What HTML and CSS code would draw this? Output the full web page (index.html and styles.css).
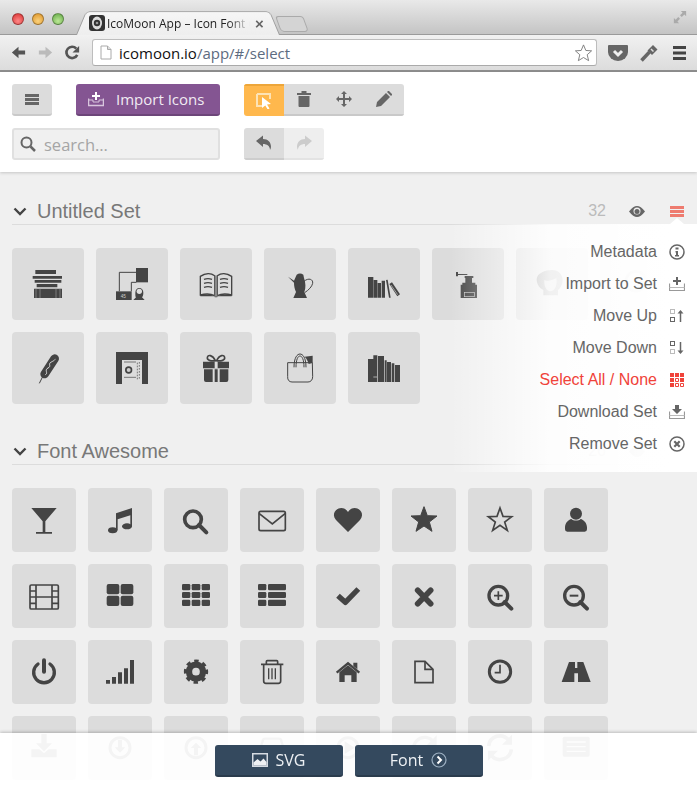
FILE: index.html
```html
<!DOCTYPE html>
<html lang="en">
<head>
<meta charset="utf-8">
<title>IcoMoon App</title>
<link rel="stylesheet" href="styles.css">
</head>
<body>
<header class="browser">
  <div class="tabstrip">
    <div class="lights"><i class="light red"></i><i class="light amber"></i><i class="light green"></i></div>
    <div class="tab">
      <svg class="favicon" viewBox="0 0 16 16"><rect width="16" height="16" rx="3" fill="#333"/><ellipse cx="8" cy="8" rx="5" ry="6.5" fill="#ddd"/><circle cx="8" cy="8" r="3.2" fill="#333"/><circle cx="8" cy="8" r="1.3" fill="#999"/></svg>
      <span class="tab-title">IcoMoon App – Icon Font C</span>
      <span class="tab-close">×</span>
    </div>
    <div class="newtab"></div>
    <svg class="fullscreen" viewBox="0 0 16 16"><path d="M9 1h6v6l-2-2-3 3-2-2 3-3zM7 15H1V9l2 2 3-3 2 2-3 3z" fill="#aaa"/></svg>
  </div>
  <div class="toolbar">
    <svg class="nav" viewBox="0 0 18 18"><path d="M2 9l7-6v4h7v4H9v4z" fill="#555"/></svg>
    <svg class="nav" viewBox="0 0 18 18"><path d="M16 9l-7-6v4H2v4h7v4z" fill="#bbb"/></svg>
    <svg class="nav" viewBox="0 0 18 18"><path d="M14 11.5A6 6 0 1 1 13 4.8" fill="none" stroke="#555" stroke-width="2.8"/><path d="M16 2v7H9z" fill="#555"/></svg>
    <div class="omnibox">
      <svg class="pageic" viewBox="0 0 12 14"><path d="M1 .5h6.500l3.500 3.500v9.500H1z" fill="#fff" stroke="#aaa"/><path d="M7.500 .5V4H11" fill="#ddd" stroke="#aaa"/></svg>
      <span class="url"><b>icomoon.io</b>/app/#/select</span>
      <svg class="urlstar" viewBox="0 0 20 20"><polygon points="10,1 12.600,7.200 19,7.600 14.100,11.900 15.700,18.500 10,15 4.300,18.500 5.900,11.900 1,7.600 7.400,7.200" fill="#fff" stroke="#777"/></svg>
    </div>
    <svg class="ext pocket" viewBox="0 0 20 16"><path d="M1 0h18a1 1 0 0 1 1 1v6a10 9 0 0 1-20 0V1a1 1 0 0 1 1-1z" fill="#666"/><path d="M6 6l4 4 4-4" fill="none" stroke="#eee" stroke-width="3"/></svg>
    <svg class="ext key" viewBox="0 0 18 18"><path d="M1.500 16.500L9.500 8" stroke="#666" stroke-width="3.500"/><path d="M7.500 6.500L13 1l4.500 4.500L12 11z" fill="#666"/><path d="M11 5l2.500 2.500" stroke="#ddd" stroke-width="1.500"/></svg>
    <svg class="ext burger" viewBox="0 0 14 14"><path d="M0 0h13v3H0zM0 5.500h13v3H0zM0 11h13v3H0z" fill="#444"/></svg>
  </div>
</header>

<section class="topbar">
  <div class="row">
    <button class="btn btn-menu"><svg class="ic16" viewBox="0 0 16 16"><path d="M1 3h14v3H1zM1 7h14v3H1zM1 11h14v3H1z" fill="#666"/></svg></button>
    <button class="btn btn-import">
      <svg class="ic16" viewBox="0 0 16 14"><path d="M7 0h2v3h3v2H9v3H7V5H4V3h3z" fill="#fff"/><path d="M.500 6.500v7h15v-7" fill="none" stroke="#d8c6dd" stroke-width="1.500"/><path d="M.500 8h4.500v2h6V8h4.500" fill="none" stroke="#d8c6dd"/></svg>
      <span>Import Icons</span>
    </button>
    <div class="group">
      <button class="seg seg-on"><svg class="ic16" viewBox="0 0 16 16"><path d="M1 1h13v5M1 1v12h5" fill="none" stroke="#fde3b6" stroke-width="2"/><path d="M6 4l9 7-4 .5 2.500 4-1.800 1-2.400-4L6 15z" fill="#fff"/></svg></button>
      <button class="seg"><svg class="ic16" viewBox="0 0 16 16"><path d="M1 2h14v2H1zM5.500 2V0h5v2zM2.500 5h11v10a1 1 0 0 1-1 1h-9a1 1 0 0 1-1-1z" fill="#666"/></svg></button>
      <button class="seg"><svg class="ic16" viewBox="0 0 16 16"><path d="M8 0l3 3H9v4h4V5l3 3-3 3V9H9v4h2l-3 3-3-3h2V9H3v2L0 8l3-3v2h4V3H5z" fill="#666"/></svg></button>
      <button class="seg"><svg class="ic16" viewBox="0 0 16 16"><path d="M0 16l1-5 9-9 4 4-9 9zM11 1l1-1h1l3 3v1l-1 1z" fill="#666"/></svg></button>
    </div>
  </div>
  <div class="row">
    <div class="search">
      <svg class="ic16" viewBox="0 0 16 16"><circle cx="6.500" cy="6.500" r="5" fill="none" stroke="#666" stroke-width="2"/><path d="M10.500 10.500L15 15" stroke="#666" stroke-width="2.500"/></svg>
      <span class="placeholder">search…</span>
    </div>
    <div class="group group-undo">
      <button class="seg seg-undo"><svg class="ic16" viewBox="0 0 16 16"><path d="M0 6l7-5.500V4c5 0 8 3 8 8 0 1-.500 2-1 3 0-4-3-6-7-6v3z" fill="#666"/></svg></button>
      <button class="seg seg-redo"><svg class="ic16" viewBox="0 0 16 16"><path d="M16 6L9 .500V4c-5 0-8 3-8 8 0 1 .500 2 1 3 0-4 3-6 7-6v3z" fill="#ccc"/></svg></button>
    </div>
  </div>
</section>

<main class="main">
  <section class="set">
    <div class="set-head">
      <svg class="chev" viewBox="0 0 14 10"><path d="M1.500 1.500L7 7l5.500-5.500" fill="none" stroke="#444" stroke-width="2.400"/></svg>
      <h2>Untitled Set</h2>
      <span class="count">32</span>
      <svg class="eye" viewBox="0 0 16 11"><path d="M0 5.500C3 1.500 5.500 0 8 0s5 1.500 8 5.500C13 9.500 10.500 11 8 11S3 9.500 0 5.500z" fill="#666"/><circle cx="8" cy="5" r="3.500" fill="#eee"/><circle cx="8" cy="5.500" r="2.500" fill="#666"/></svg>
      <svg class="menuic" viewBox="0 0 14 11"><path d="M0 0h14v3H0zM0 4h14v3H0zM0 8h14v3H0z" fill="#ee7b6f"/></svg>
    </div>
    <div class="grid grid-big">
      <div class="tile"><svg viewBox="0 0 216 216"><path d="M70 66h62v12H70zM62 84h88v8H62zM68 96h80v8H68zM74 108h62v10H74zM66 122h84v28H66z"/><path d="M72 122v28M84 122v28M132 122v28M144 122v28" stroke="#999" stroke-width="2"/></svg></div>
      <div class="tile"><svg viewBox="0 0 216 216"><path d="M70 130V73h50" fill="none" stroke="#444" stroke-width="3"/><path d="M120 60h36v43h-36z"/><path d="M106 103h15M106 103v27" stroke="#444" stroke-width="3"/><path d="M60 130h47v26H60z"/><text class="tiny" x="74" y="150">45</text><path d="M118 134a12 14 0 0 1 24 0c0 8-2 12-4 14l8 8h-34l8-8c-2-2-2-6-2-14z"/><circle cx="130" cy="130" r="8" fill="#dcdcdc"/></svg></div>
      <div class="tile"><svg viewBox="0 0 216 216"><path d="M61 85c15-10 32-10 43-2v60c-12-6-28-6-43-2zM155 85c-15-10-32-10-43-2v60c12-6 28-6 43-2z" fill="none" stroke="#444" stroke-width="4"/><path d="M72 94c8-3 16-3 24 0M72 106c8-3 16-3 24 0M72 118c8-3 16-3 24 0M120 94c8-3 16-3 24 0M120 106c8-3 16-3 24 0M120 118c8-3 16-3 24 0" fill="none" stroke="#444" stroke-width="4"/><path d="M104 83h8v65h-8z" fill="#888"/><path d="M61 141c15-3 32-3 47 5 15-8 32-8 47-5v4H112l-4 3-4-3H61z"/></svg></div>
      <div class="tile"><svg viewBox="0 0 216 216"><path d="M98 80c6-5 14-5 20 0l2 10c5 14 6 30 1 42l8 18H88l8-18c-4-10-6-18-6-28L72 86l18 12z"/><path d="M120 100c14-12 28-6 26 6-2 10-12 20-24 28" fill="none" stroke="#444" stroke-width="3"/></svg></div>
      <div class="tile"><svg viewBox="0 0 216 216"><path d="M60 87h16v62H60zM77 96h11v53H77zM89 105h10v44H89zM101 98h10v51h-10zM114 96l5-1 9 54h-5z"/><path d="M124 108l8-5 24 36-8 6z"/><path d="M129 111l20 29" stroke="#ccc" stroke-width="2"/></svg></div>
      <div class="tile"><svg viewBox="0 0 216 216"><path d="M72 72h6v6h28v3H78v4h-6zM98 84h26v6h-4v14h10v6h5v40H86v-40h5v-6h9V90h-2z"/><rect x="97" y="133" width="30" height="13" fill="none" stroke="#ccc" stroke-width="2"/></svg></div>
      <div class="tile"><svg viewBox="0 0 216 216"><path d="M108 66c20 0 32 14 32 30 0 12-6 24-14 30v16H82v-16c-14-6-20-20-20-32 0-18 26-28 46-28z" fill="#888"/><path d="M85 96c10 6 30-2 36-6 4 20-4 40-18 40-12 0-20-18-18-34z" fill="#ccc"/></svg></div>
      <div class="tile"><svg viewBox="0 0 216 216"><circle cx="108" cy="100" r="30" fill="none" stroke="#777" stroke-width="8"/></svg></div>
      <div class="tile"><svg viewBox="0 0 216 216"><path d="M128 80L98 126" stroke="#444" stroke-width="26" stroke-linecap="round"/><path d="M92 134L82 154" stroke="#444" stroke-width="3"/><path d="M100 128c10-4-4-14 8-20s-2-12 10-18 8-6 12-8" fill="none" stroke="#ddd" stroke-width="3"/></svg></div>
      <div class="tile"><svg viewBox="0 0 216 216"><path d="M60 60h96v96h-18V84H78v72H60z"/><path d="M84 90h36M84 136h36" stroke="#444" stroke-width="2"/><circle cx="98" cy="114" r="11"/><circle cx="98" cy="114" r="6" fill="#ccc"/><path d="M124 92v50M130 90v52" stroke="#777" stroke-width="3" stroke-dasharray="5 4"/></svg></div>
      <div class="tile"><svg viewBox="0 0 216 216"><path d="M69 89h78v20H69zM72 112h26v38H78a6 6 0 0 1-6-6zM104 112h9v38h-9zM119 112h26v32a6 6 0 0 1-6 6h-20z"/><path d="M104 89h9v20h-9z" fill="#dcdcdc"/><path d="M106 86c-8-18-24-20-24-8 0 8 14 10 24 8zM110 86c8-18 24-20 24-8 0 8-14 10-24 8z" fill="none" stroke="#444" stroke-width="5"/></svg></div>
      <div class="tile"><svg viewBox="0 0 216 216"><path d="M71 92h74l1 42c0 10-6 16-14 16H84c-8 0-14-6-13-16z" fill="none" stroke="#444" stroke-width="3"/><path d="M90 106c0-30 10-40 18-40s18 10 18 40M96 106c0-24 6-34 12-34s12 10 12 34" fill="none" stroke="#444" stroke-width="3"/><path d="M122 74l24-3v21l-12 4c-2-8-6-16-12-22z"/></svg></div>
      <div class="tile"><svg viewBox="0 0 216 216"><path d="M60 81h16v69H60zM76 70h12v80H76zM90 72h18v78H90zM110 85h6v65h-6zM117 90h12v60h-12zM131 94h8v56h-8zM141 99h15v51h-15z"/><path d="M76 135h12" stroke="#aaa" stroke-width="3"/></svg></div>
    </div>
  </section>

  <section class="set set-fa">
    <div class="set-head">
      <svg class="chev" viewBox="0 0 14 10"><path d="M1.500 1.500L7 7l5.500-5.500" fill="none" stroke="#444" stroke-width="2.400"/></svg>
      <h2>Font Awesome</h2>
      <span class="count">26</span>
      <svg class="eye" viewBox="0 0 16 11"><path d="M0 5.500C3 1.500 5.500 0 8 0s5 1.500 8 5.500C13 9.500 10.500 11 8 11S3 9.500 0 5.500z" fill="#666"/></svg>
      <svg class="menuic" viewBox="0 0 14 11"><path d="M0 0h14v3H0zM0 4h14v3H0zM0 8h14v3H0z" fill="#999"/></svg>
    </div>
    <div class="grid grid-fa">
      <div class="tile"><svg viewBox="0 0 192 192"><polygon points="58,60 134,60 100,100 100,132 120,132 120,137 72,137 72,132 92,132 92,100"/></svg></div>
      <div class="tile"><svg viewBox="0 0 192 192"><ellipse cx="74" cy="127" rx="14" ry="9"/><ellipse cx="117" cy="115" rx="15" ry="9"/><path d="M84 127V76l48-16v55h-5V82l-38 12v33z"/></svg></div>
      <div class="tile"><svg viewBox="0 0 192 192"><circle cx="87" cy="94" r="25" fill="none" stroke="#444" stroke-width="11"/><path d="M105 111l22 22" stroke="#444" stroke-width="12" stroke-linecap="round"/></svg></div>
      <div class="tile"><svg viewBox="0 0 192 192"><rect x="57" y="70" width="79" height="58" rx="5" fill="none" stroke="#444" stroke-width="5"/><path d="M57 76l40 32 39-32" fill="none" stroke="#444" stroke-width="5"/></svg></div>
      <div class="tile"><svg viewBox="0 0 192 192"><path d="M96 132L60 96C45 78 60 60 76 60c10 0 16 6 20 12 4-6 10-12 20-12 16 0 31 18 16 36z"/></svg></div>
      <div class="tile"><svg viewBox="0 0 192 192"><polygon points="96,56 106,83 135,84 112,102 120,130 96,114 72,130 80,102 57,84 86,83" stroke="#444" stroke-width="3" stroke-linejoin="round"/></svg></div>
      <div class="tile"><svg viewBox="0 0 192 192"><polygon points="96,60 105,85 131,86 110,102 118,127 96,112 74,127 82,102 61,86 87,85" fill="none" stroke="#444" stroke-width="5"/></svg></div>
      <div class="tile"><svg viewBox="0 0 192 192"><circle cx="96" cy="77" r="18"/><path d="M63 118c0-14 11-23 19-25 6 6 22 6 28 0 8 2 19 11 19 25v6q0 7-7 7H70q-7 0-7-7z"/></svg></div>

      <div class="tile"><svg viewBox="0 0 192 192"><rect x="54" y="63" width="85" height="72" rx="4" fill="none" stroke="#444" stroke-width="5"/><path d="M72 63v72M120 63v72M54 81h18M54 99h18M54 118h18M120 81h19M120 99h19M120 118h19M72 99h48" fill="none" stroke="#444" stroke-width="5"/></svg></div>
      <div class="tile"><svg viewBox="0 0 192 192"><rect x="56" y="60" width="38" height="31" rx="6"/><rect x="98" y="60" width="38" height="31" rx="6"/><rect x="56" y="95" width="38" height="31" rx="6"/><rect x="98" y="95" width="38" height="31" rx="6"/></svg></div>
      <div class="tile"><svg viewBox="0 0 192 192"><rect x="54" y="60" width="25" height="19" rx="4"/><rect x="83" y="60" width="26" height="19" rx="4"/><rect x="113" y="60" width="25" height="19" rx="4"/><rect x="54" y="84" width="25" height="18" rx="4"/><rect x="83" y="84" width="26" height="18" rx="4"/><rect x="113" y="84" width="25" height="18" rx="4"/><rect x="54" y="107" width="25" height="19" rx="4"/><rect x="83" y="107" width="26" height="19" rx="4"/><rect x="113" y="107" width="25" height="19" rx="4"/></svg></div>
      <div class="tile"><svg viewBox="0 0 192 192"><rect x="54" y="60" width="25" height="19" rx="4"/><rect x="84" y="60" width="54" height="19" rx="4"/><rect x="54" y="84" width="25" height="18" rx="4"/><rect x="84" y="84" width="54" height="18" rx="4"/><rect x="54" y="107" width="25" height="19" rx="4"/><rect x="84" y="107" width="54" height="19" rx="4"/></svg></div>
      <div class="tile"><svg viewBox="0 0 192 192"><path d="M66 95l22 20 39-40" fill="none" stroke="#444" stroke-width="16" stroke-linejoin="round"/></svg></div>
      <div class="tile"><svg viewBox="0 0 192 192"><path d="M77 79l39 40M116 79l-39 40" stroke="#444" stroke-width="17" stroke-linecap="round"/></svg></div>
      <div class="tile"><svg viewBox="0 0 192 192"><circle cx="91" cy="95" r="28" fill="none" stroke="#444" stroke-width="10"/><path d="M110 114l20 20" stroke="#444" stroke-width="12" stroke-linecap="round"/><path d="M78 95h26M91 82v26" stroke="#444" stroke-width="5"/></svg></div>
      <div class="tile"><svg viewBox="0 0 192 192"><circle cx="90" cy="95" r="28" fill="none" stroke="#444" stroke-width="10"/><path d="M109 114l20 20" stroke="#444" stroke-width="12" stroke-linecap="round"/><path d="M77 95h26" stroke="#444" stroke-width="6"/></svg></div>

      <div class="tile"><svg viewBox="0 0 192 192"><path d="M78 72a31 31 0 1 0 36 0" fill="none" stroke="#444" stroke-width="10" stroke-linecap="round"/><path d="M96 61v34" stroke="#444" stroke-width="12" stroke-linecap="round"/></svg></div>
      <div class="tile"><svg viewBox="0 0 192 192"><path d="M54 120h12v11H54zM72 111h12v20H72zM90 97h12v34H90zM108 85h12v46h-12zM126 60h12v71h-12z"/></svg></div>
      <div class="tile"><svg viewBox="0 0 192 192"><circle cx="96" cy="95" r="21" fill="none" stroke="#444" stroke-width="19"/><circle cx="96" cy="95" r="32" fill="none" stroke="#444" stroke-width="9" stroke-dasharray="13 12.130" transform="rotate(-11 96 95)"/></svg></div>
      <div class="tile"><svg viewBox="0 0 192 192"><path d="M63 73h67M79 72V65q0-3 3-3h28q3 0 3 3v7" fill="none" stroke="#444" stroke-width="5"/><path d="M71 73v50q0 7 7 7h37q7 0 7-7V73" fill="none" stroke="#444" stroke-width="5"/><path d="M86 85v33M96 85v33M106 85v33" stroke="#444" stroke-width="4"/></svg></div>
      <div class="tile"><svg viewBox="0 0 192 192"><path d="M62 98l34-28 34 28" fill="none" stroke="#444" stroke-width="7"/><path d="M112 68h12v20l-12-10zM70 97l26-21 26 21v29h-16v-20H86v20H70z"/></svg></div>
      <div class="tile"><svg viewBox="0 0 192 192"><path d="M69 64h30l24 24v40H69z" fill="none" stroke="#444" stroke-width="5"/><path d="M99 64v24h24" fill="none" stroke="#444" stroke-width="5"/></svg></div>
      <div class="tile"><svg viewBox="0 0 192 192"><circle cx="96" cy="95" r="32" fill="none" stroke="#444" stroke-width="9"/><path d="M96 74v24H80" fill="none" stroke="#444" stroke-width="5"/></svg></div>
      <div class="tile"><svg viewBox="0 0 192 192"><path d="M75 66h43l22 60H53z"/><path d="M93 66h7v18h-7zM91 100h11v26H91z" fill="#dcdcdc"/></svg></div>

      <div class="tile"><svg viewBox="0 0 192 192"><path d="M88 54h16v28h16l-24 24-24-24h16zM58 100h24l14 12 14-12h24v24H58z"/></svg></div>
      <div class="tile"><svg viewBox="0 0 192 192"><circle cx="96" cy="95" r="30" fill="none" stroke="#444" stroke-width="9"/><path d="M90 72h12v22h10l-16 16-16-16h10z"/></svg></div>
      <div class="tile"><svg viewBox="0 0 192 192"><circle cx="96" cy="95" r="30" fill="none" stroke="#444" stroke-width="9"/><path d="M90 118h12V96h10L96 80 80 96h10z"/></svg></div>
      <div class="tile"><svg viewBox="0 0 192 192"><path d="M68 75q0-7 8-7h40q8 0 8 7l12 36v24H56v-24z" fill="none" stroke="#444" stroke-width="7"/></svg></div>
      <div class="tile"><svg viewBox="0 0 192 192"><circle cx="96" cy="95" r="30" fill="none" stroke="#444" stroke-width="9"/><path d="M86 76l30 19-30 19z"/></svg></div>
      <div class="tile"><svg viewBox="0 0 192 192"><path d="M126 80a33 33 0 1 0 4 24" fill="none" stroke="#444" stroke-width="10"/><path d="M134 58v30h-30z"/></svg></div>
      <div class="tile"><svg viewBox="0 0 192 192"><path d="M62 90a34 34 0 0 1 60-18M130 100a34 34 0 0 1-60 18" fill="none" stroke="#444" stroke-width="11"/><path d="M132 56v30h-30zM60 134v-30h30z"/></svg></div>
      <div class="tile"><svg viewBox="0 0 192 192"><rect x="56" y="62" width="81" height="60" rx="5" fill="#444"/><path d="M68 78h57M68 92h57M68 106h57" stroke="#dcdcdc" stroke-width="4"/></svg></div>
    </div>
  </section>
</main>

<aside class="setmenu">
  <div class="item"><span>Metadata</span><svg class="ic16" viewBox="0 0 16 16"><circle cx="8" cy="8" r="7" fill="none" stroke="#666" stroke-width="1.500"/><path d="M6.500 3.500h3v2h-3zM6.500 7h2.500v4h1v1.500h-4V11h1V8.500h-.500z" fill="#666"/></svg></div>
  <div class="item"><span>Import to Set</span><svg class="ic16" viewBox="0 0 16 14"><path d="M7 0h2v3h3v2H9v3H7V5H4V3h3z" fill="#666"/><path d="M.500 6.500v7h15v-7" fill="none" stroke="#999" stroke-width="1.200"/><path d="M.500 10.500h15" stroke="#bbb" stroke-width="1"/></svg></div>
  <div class="item"><span>Move Up</span><svg class="ic16" viewBox="0 0 16 16"><rect x="1.500" y="1.500" width="4" height="4" fill="none" stroke="#777" stroke-dasharray="1 1"/><rect x="1.500" y="9.500" width="4" height="4" fill="none" stroke="#666"/><path d="M11.500 14V4" stroke="#666" stroke-width="1.500"/><path d="M8.500 5.500l3-3.500 3 3.500z" fill="#666"/></svg></div>
  <div class="item"><span>Move Down</span><svg class="ic16" viewBox="0 0 16 16"><rect x="1.500" y="1.500" width="4" height="4" fill="none" stroke="#666"/><rect x="1.500" y="9.500" width="4" height="4" fill="none" stroke="#777" stroke-dasharray="1 1"/><path d="M11.500 2v10" stroke="#666" stroke-width="1.500"/><path d="M8.500 10.500l3 3.500 3-3.500z" fill="#666"/></svg></div>
  <div class="item item-red"><span>Select All / None</span><svg class="ic14" viewBox="0 0 14 14"><path d="M0 0h4v4H0zM5 0h4v4H5zM10 0h4v4h-4zM0 5h4v4H0zM0 10h4v4H0zM10 5h4v4h-4z" fill="#f0433a"/><path d="M5.500 5.500h3v3h-3zM5.500 10.500h3v3h-3zM10.500 10.500h3v3h-3z" fill="none" stroke="#f0433a"/></svg></div>
  <div class="item"><span>Download Set</span><svg class="ic16" viewBox="0 0 16 14"><path d="M6 0h4v4h3L8 9 3 4h3z" fill="#666"/><path d="M.500 6.500v7h15v-7" fill="none" stroke="#999" stroke-width="1.200"/><path d="M.500 10.500h15" stroke="#bbb" stroke-width="1"/></svg></div>
  <div class="item"><span>Remove Set</span><svg class="ic16" viewBox="0 0 16 16"><circle cx="8" cy="8" r="7" fill="none" stroke="#666" stroke-width="1.500"/><path d="M5.300 5.300l5.400 5.400M10.700 5.300l-5.400 5.400" stroke="#666" stroke-width="2.200"/></svg></div>
</aside>

<footer class="bottombar">
  <button class="navy"><svg class="ic16" viewBox="0 0 16 14"><rect width="16" height="14" fill="#d5dbe2"/><rect x="1.500" y="1.500" width="13" height="11" fill="#34495e"/><path d="M1.500 12.500v-3l4-3.500 3 2.500 3-3 3 3.500v3.500z" fill="#eef0f3"/></svg><span>SVG</span></button>
  <button class="navy"><span>Font</span><svg class="ic16" viewBox="0 0 16 16"><circle cx="8" cy="8" r="7" fill="none" stroke="#9db0c2" stroke-width="1.200"/><path d="M6.500 4.500L10 8l-3.500 3.500" fill="none" stroke="#fff" stroke-width="2"/></svg></button>
</footer>
</body>
</html>
```
FILE: styles.css
```css
* { box-sizing: border-box; }
html, body { margin: 0; height: 789px; overflow: hidden; }
body { position: relative; background: #f0f0f0; font-family: "Liberation Sans", Arial, sans-serif; }
button { border: 0; padding: 0; margin: 0; font: inherit; }
svg { display: block; flex: none; }
.ic16 { width: 16px; height: 16px; }
.ic14 { width: 14px; height: 14px; margin: 0 1px; }

/* browser chrome */
.browser { height: 72px; border-bottom: 2px solid #8f8f8f; }
.tabstrip { height: 35px; display: flex; align-items: flex-end; position: relative; padding-left: 12px; background: linear-gradient(#e9e9e9, #c4c4c4); border-bottom: 1px solid #9a9a9a; }
.lights { display: flex; gap: 8px; align-self: flex-start; margin-top: 13px; width: 64px; }
.light { width: 12px; height: 12px; border-radius: 50%; border: 1px solid rgba(0,0,0,.3); }
.red { background: radial-gradient(circle at 50% 70%, #f88, #d8302f); }
.amber { background: radial-gradient(circle at 50% 70%, #fbd27c, #dc9226); }
.green { background: radial-gradient(circle at 50% 70%, #bce896, #62a845); }
.tab { position: relative; width: 204px; height: 24px; margin-bottom: -1px; display: flex; align-items: center; gap: 2px; padding: 0 0 0 13px; z-index: 1; }
.tab::before { content: ""; position: absolute; inset: -3px 0 0; z-index: -1; background: linear-gradient(#f6f6f6, #eeeeee); border: 1px solid #a0a0a0; border-bottom: 0; border-radius: 5px 5px 0 0; transform: perspective(60px) rotateX(14deg); transform-origin: bottom; }
.favicon { width: 16px; height: 16px; }
.tab-title { width: 143px; overflow: hidden; white-space: nowrap; font: 12px "Open Sans", sans-serif; color: #222; -webkit-mask-image: linear-gradient(to right, #000 85%, transparent); mask-image: linear-gradient(to right, #000 85%, transparent); }
.tab-close { font: bold 15px "Liberation Sans", sans-serif; color: #666; margin-left: 3px; }
.newtab { width: 28px; height: 16px; margin: 0 0 2px -2px; background: #d4d4d4; border: 1px solid #aaa; border-radius: 3px 3px 4px 4px; transform: skewX(20deg); }
.fullscreen { position: absolute; right: 10px; top: 10px; width: 14px; height: 14px; }
.toolbar { height: 35px; display: flex; align-items: center; padding-left: 10px; background: linear-gradient(#f1f1f1, #dcdcdc); }
.nav { width: 17px; height: 17px; margin-right: 10px; }
.nav + .nav + .nav { margin-right: 0; }
.omnibox { width: 505px; height: 27px; margin-left: 11px; padding: 0 1px 0 7px; display: flex; align-items: center; background: #fff; border: 1px solid #bdbdbd; border-bottom-color: #aaa; border-radius: 3px; }
.pageic { width: 12px; height: 15px; }
.url { margin-left: 7px; flex: 1; font: 15px "Open Sans", sans-serif; color: #5d6b80; white-space: nowrap; }
.url b { font-weight: 400; color: #111; }
.urlstar { width: 19px; height: 18px; margin-right: 2px; }
.ext { height: 16px; }
.pocket { width: 20px; margin-left: 11px; }
.key { width: 18px; height: 18px; margin-left: 12px; }
.burger { width: 14px; height: 14px; margin-left: 15px; }

/* top panel */
.topbar { height: 100px; padding: 12px; display: flex; flex-direction: column; gap: 12px; background: #fff; box-shadow: 0 1px 3px rgba(0,0,0,.18); position: relative; z-index: 2; }
.row { display: flex; align-items: stretch; height: 32px; }
.btn, .seg { display: flex; align-items: center; justify-content: center; border-bottom: 2px solid #c9c9c9; }
.btn-menu { width: 40px; background: #dcdcdc; border-radius: 3px; margin-right: 24px; }
.btn-import { width: 144px; gap: 12px; justify-content: flex-start; padding-left: 12px; margin-right: 24px; background: #845592; border-bottom-color: #6c4579; border-radius: 3px; color: #f1ebf3; font: 15px "Open Sans", sans-serif; }
.group { display: flex; border-radius: 3px; overflow: hidden; }
.seg { width: 40px; background: #dcdcdc; }
.seg-on { background: #ffb84d; border-bottom: 0; border-top: 2px solid #eda63a; }
.search { width: 208px; margin-right: 24px; display: flex; align-items: center; gap: 8px; padding-left: 6px; background: #f0f0f0; border: 2px solid #e0e0e0; border-radius: 3px; }
.placeholder { font: 16.500px "Open Sans", sans-serif; color: #a5a5a5; }
.seg-undo { background: #dcdcdc; border-bottom-color: #cdcdcd; }
.seg-redo { background: #eeeeee; border-bottom-color: #e3e3e3; }

/* icon sets */
.main { padding: 28px 12px 0; }
.set-fa { margin-top: 36px; }
.set-head { height: 25px; display: flex; align-items: center; border-bottom: 1px solid #dcdcdc; padding-bottom: 2px; }
.chev { width: 14px; height: 10px; margin: 2px 10px 0 1px; }
h2 { margin: 0; flex: 1; font-size: 20px; font-weight: 400; color: #787878; }
.count { font-size: 16px; color: #bbb; margin-right: 23px; }
.eye { width: 16px; height: 11px; margin-right: 25px; }
.menuic { width: 14px; height: 11px; margin-right: 1px; }
.grid { display: grid; margin-top: 23px; }
.grid-big { grid-template-columns: repeat(8, 72px); gap: 12px; }
.grid-fa { grid-template-columns: repeat(8, 64px); gap: 12px; }
.tile { background: #dcdcdc; border-radius: 4px; fill: #444; }
.tile svg { width: 100%; height: 100%; }
.tiny { font: 14px "Liberation Sans", sans-serif; fill: #ccc; }

/* floating set menu */
.setmenu { position: absolute; z-index: 1; top: 224px; right: 0; width: 247px; height: 248px; padding: 12px 12px 0 0; background: linear-gradient(to right, rgba(255,255,255,0), rgba(255,255,255,.88) 100px, rgba(255,255,255,.97) 170px, #fff 220px); }
.setmenu::before { content: ""; position: absolute; top: -6px; right: 13px; border: 7px solid transparent; border-top: 0; border-bottom: 6px solid #fff; }
.item { height: 32px; display: flex; align-items: center; justify-content: flex-end; gap: 12px; font-size: 16px; color: #666; }
.item-red { color: #f0433a; }

/* bottom bar */
.bottombar { position: fixed; z-index: 3; left: 0; right: 0; bottom: 0; height: 56px; display: flex; align-items: center; justify-content: center; gap: 12px; background: rgba(255,255,255,.94); box-shadow: 0 -1px 3px rgba(0,0,0,.22); }
.navy { width: 128px; height: 32px; display: flex; align-items: center; justify-content: center; gap: 8px; background: #34495e; border-bottom: 2px solid #2a3b4c; border-radius: 3px; color: #eef1f4; font: 16px "Open Sans", sans-serif; }
```
